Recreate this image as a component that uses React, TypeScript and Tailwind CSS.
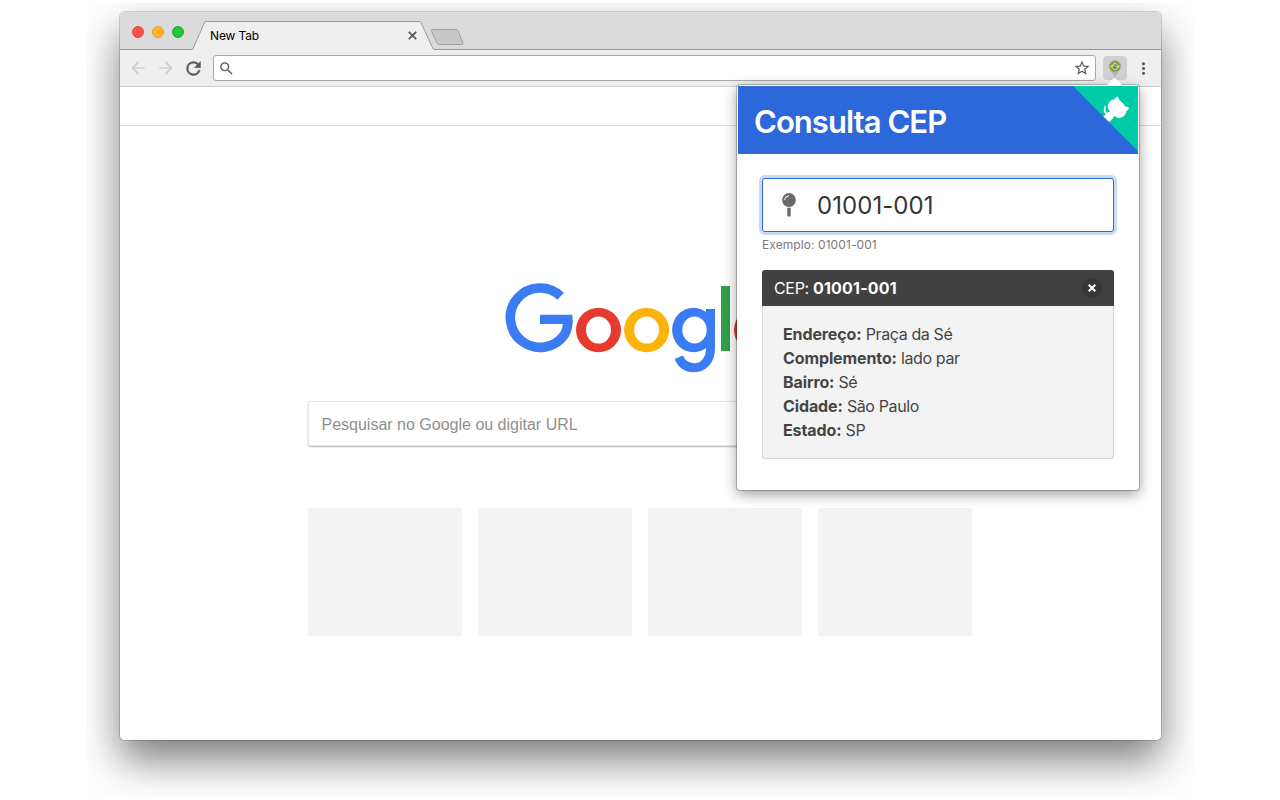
import React from "react";
import { MdArrowBack, MdArrowForward, MdSearch, MdStarBorder, MdMoreVert } from "react-icons/md";

const details = [
  { label: "Endereço:", value: "Praça da Sé" },
  { label: "Complemento:", value: "lado par" },
  { label: "Bairro:", value: "Sé" },
  { label: "Cidade:", value: "São Paulo" },
  { label: "Estado:", value: "SP" },
];

function TitleBar() {
  return (
    <div className="relative flex h-[38px] shrink-0 items-end border-b border-[#999] bg-[#dcdbdc] pl-3">
      <div className="flex gap-2 pb-[11px]">
        <span className="size-3 rounded-full border border-[#e9473f] bg-[#ff514c]" />
        <span className="size-3 rounded-full border border-[#e2a325] bg-[#ffb429]" />
        <span className="size-3 rounded-full border border-[#17b22d] bg-[#20c636]" />
      </div>
      <div className="relative -mb-px ml-2 flex h-[29px] w-[242px] items-center justify-between pr-[17px] pl-[18px]">
        <svg className="absolute inset-0" width="242" height="29" viewBox="0 0 242 29">
          <path d="M0 29V28.500Q.8 28.300 1.300 27L12.600 1.500Q13 .5 14 .5H227.500Q228.500 .5 229 1.500L240.700 27Q241.200 28.300 242 28.500V29Z" fill="#efefef" />
          <path d="M0 28.500Q.8 28.300 1.300 27L12.600 1.500Q13 .5 14 .5H227.500Q228.500 .5 229 1.500L240.700 27Q241.200 28.500 242 28.500" fill="none" stroke="#999" />
        </svg>
        <span className="relative text-[12px] leading-4 tracking-[-0.150px] text-black">New Tab</span>
        <svg className="relative" width="9" height="9" viewBox="0 0 9 9">
          <path d="M.8 .8L8.200 8.200M8.200 .8L.8 8.200" stroke="#5a5a5a" strokeWidth="1.800" />
        </svg>
      </div>
      <svg className="mb-[3px] -ml-1" width="35" height="18" viewBox="0 0 35 18">
        <path d="M2.200 1.500H26Q27.500 1.500 28 2.800L33 15Q33.500 16.500 32.200 16.500H9Q7.700 16.500 7 15.200L1.300 2.800Q.8 1.500 2.200 1.500Z" fill="#c8c8c8" stroke="#a0a0a0" />
      </svg>
    </div>
  );
}

function Toolbar() {
  return (
    <div className="flex h-[37px] shrink-0 items-center border-b border-[#cfcfcf] bg-[#efefef] pl-2">
      <MdArrowBack className="size-5 text-[#cecece]" />
      <MdArrowForward className="ml-2 size-5 text-[#cecece]" />
      <svg className="ml-[7px]" width="21" height="21" viewBox="0 0 24 24">
        <path d="M17.650 6.350A7.960 7.960 0 0 0 12 4a8 8 0 1 0 7.730 10h-2.080A6 6 0 1 1 12 6c1.660 0 3.140.69 4.220 1.780L13 11h7V4z" fill="#5a5a5a" stroke="#5a5a5a" strokeWidth=".5" />
      </svg>
      <div className="ml-[9px] flex h-[26px] w-[883px] items-center justify-between rounded-[3px] border border-[#a8a8a8] bg-white pr-1 pl-1">
        <MdSearch className="size-[17px] text-[#5a5a5a]" />
        <MdStarBorder className="size-[18px] text-[#5a5a5a]" />
      </div>
      <div className="ml-[7px] flex h-6 w-6 items-start justify-center rounded-sm bg-[#d0d0d0] pt-1">
        <svg width="14" height="17" viewBox="0 0 14 17">
          <path d="M7 0A6.300 6.300 0 0 0 .7 6.300C.7 10 5 12.500 7 17C9 12.500 13.300 10 13.300 6.300A6.300 6.300 0 0 0 7 0Z" fill="#b1b1b1" />
          <circle cx="7" cy="6.400" r="5.300" fill="#78a83c" />
          <path d="M2.200 6.400L7 2.600L11.800 6.400L7 10.200Z" fill="#ebe04c" />
          <circle cx="7" cy="6.400" r="2.200" fill="#2a68b8" />
          <path d="M4.900 5.700Q7.200 5.400 9.100 7.200" stroke="#e6f0f5" strokeWidth=".9" fill="none" />
        </svg>
      </div>
      <MdMoreVert className="ml-[7px] size-[19px] text-[#5a5a5a]" />
    </div>
  );
}

function GoogleLogo() {
  return (
    <svg width="272" height="92" viewBox="504 282 272 92">
      <path d="M560.600 296.200A29.700 29.700 0 1 0 564.700 334.200Q567.900 328.500 567.900 320" fill="none" stroke="#3b7cf4" strokeWidth="9.600" />
      <path d="M540 314.700H572.400Q572.900 319 572.400 324H540Z" fill="#3b7cf4" />
      <ellipse cx="598.500" cy="330" rx="22.500" ry="22.300" fill="#e63a2e" />
      <ellipse cx="598.500" cy="330.100" rx="12.500" ry="13.500" fill="#fff" />
      <ellipse cx="646.600" cy="330" rx="22.500" ry="22.300" fill="#fcb40a" />
      <ellipse cx="646.600" cy="330.100" rx="12.500" ry="13.500" fill="#fff" />
      <ellipse cx="693.500" cy="330" rx="21.400" ry="22.300" fill="#3b7cf4" />
      <path d="M706 305H718V309H706Z" fill="#fff" />
      <path d="M710.500 309V348C710.500 361 703 367.700 694 367.700C686.500 367.700 681.300 363.500 678.800 357.300" fill="none" stroke="#3b7cf4" strokeWidth="9" />
      <ellipse cx="694.500" cy="330" rx="12.200" ry="13.400" fill="#fff" />
      <rect x="721" y="286" width="9" height="65" fill="#2f9e49" />
      <ellipse cx="755.500" cy="330" rx="21.500" ry="22.300" fill="#e63a2e" />
    </svg>
  );
}

function NewTabPage() {
  return (
    <div className="flex grow flex-col bg-white">
      <div className="h-[39px] shrink-0 border-b border-[#dcdcdc]" />
      <div className="ml-[188px] flex w-[664px] flex-col">
        <div className="mt-[156px] ml-[196px]">
          <GoogleLogo />
        </div>
        <div className="mt-[27px] flex h-[45px] items-center rounded-[2px] border border-[#e4e4e4] bg-white pt-[3px] pl-[12.500px] font-['Liberation_Sans',sans-serif] text-[16px] text-[#8f8f8f] shadow-[0_1px_2px_rgba(0,0,0,0.28)]">
          Pesquisar no Google ou digitar URL
        </div>
        <div className="mt-[62px] grid grid-cols-4 gap-4">
          {[0, 1, 2, 3].map((tile) => (
            <div key={tile} className="h-32 rounded-[2px] bg-[#f3f3f3]" />
          ))}
        </div>
      </div>
    </div>
  );
}

function GithubCorner() {
  return (
    <svg className="absolute top-0 right-0 text-white" width="65" height="65" viewBox="0 0 250 250">
      <path d="M0,0 L115,115 L130,115 L142,142 L250,250 L250,0 Z" fill="#00cba9" />
      <path d="M128.3,109.0 C113.8,99.7 119.0,89.6 119.0,89.6 C122.0,82.7 120.5,78.6 120.5,78.6 C119.2,72.0 123.4,76.3 123.4,76.3 C127.3,80.9 125.5,87.3 125.5,87.3 C122.9,97.6 130.6,101.9 134.4,103.2" fill="currentColor" />
      <path d="M115.0,115.0 C114.9,115.1 118.7,116.5 119.8,115.4 L133.7,101.6 C136.9,99.2 139.9,98.4 142.2,98.6 C133.8,88.0 127.5,74.4 143.8,58.0 C148.5,53.4 154.0,51.2 159.7,51.0 C160.3,49.4 163.2,43.6 171.4,40.1 C171.4,40.1 176.1,42.5 178.8,56.2 C183.1,58.6 187.2,61.8 190.9,65.4 C194.5,69.0 197.7,73.2 200.1,77.6 C213.8,80.2 216.3,84.9 216.3,84.9 C212.7,93.1 206.9,96.0 205.4,96.6 C205.1,102.4 203.0,107.8 198.3,112.5 C181.9,128.9 168.3,122.5 157.7,114.1 C157.9,116.9 156.7,120.9 152.7,124.9 L141.0,136.5 C139.8,137.7 141.6,141.9 141.8,141.8 Z" fill="currentColor" />
    </svg>
  );
}

function Popup() {
  return (
    <div className="absolute top-[73px] left-[617px] w-[402px] rounded-[3px] border border-white bg-white shadow-[0_0_0_1px_rgba(0,0,0,0.22),0_4px_14px_rgba(0,0,0,0.4)]">
      <svg className="absolute -top-[9px] right-[14px]" width="19" height="9" viewBox="0 0 19 9">
        <path d="M1 9L9.500 .5L18 9Z" fill="#fff" />
      </svg>
      <div className="relative flex h-[68px] items-center bg-[#2c68d9] pt-[3px] pl-4">
        <h1 className="text-[31px] leading-9 font-semibold tracking-[-0.950px] whitespace-nowrap text-white">Consulta CEP</h1>
        <GithubCorner />
      </div>
      <div className="flex h-[335px] flex-col px-6 pt-6">
        <div className="flex h-[54px] items-center rounded-[3px] border border-[#2c68d9] bg-white shadow-[0_0_0_3px_#cad9f6]">
          <svg className="ml-[18px]" width="16" height="26" viewBox="0 0 16 26">
            <circle cx="8" cy="8" r="6.900" fill="#6b6b6b" />
            <path d="M3.600 7.500A4.500 4.500 0 0 1 7.600 3.700" fill="none" stroke="#fff" strokeWidth="1" strokeLinecap="round" />
            <path d="M6.300 15.500Q8 15.900 9.700 15.500V23.500Q8 26.200 6.300 23.500Z" fill="#6b6b6b" />
          </svg>
          <span className="ml-5 pt-0.5 text-[24px] leading-7 tracking-[0.050px] text-[#363636]">01001-001</span>
        </div>
        <div className="mt-1 text-[12px] leading-[18px] tracking-[0.080px] text-[#7a7a7a]">Exemplo: 01001-001</div>
        <div className="mt-4 flex h-9 items-center justify-between rounded-t-[3px] bg-[#414141] pr-3 pl-3 text-white">
          <span className="text-[16px] leading-5 tracking-[-0.33px]">
            CEP: <strong className="font-bold tracking-[0.200px]">01001-001</strong>
          </span>
          <span className="flex size-5 items-center justify-center rounded-full bg-[#373737]">
            <svg width="8" height="8" viewBox="0 0 8 8">
              <path d="M.7 .7L7.300 7.300M7.300 .7L.7 7.300" stroke="#fff" strokeWidth="2" />
            </svg>
          </span>
        </div>
        <div className="h-[153px] rounded-b-[3px] border border-t-0 border-[#d5d5d5] bg-[#f3f3f3] pt-4 pl-5 text-[16px] leading-6 text-[#454545]">
          {details.map((row) => (
            <div key={row.label} className="tracking-[-0.380px]">
              <strong className="font-bold tracking-[-0.110px]">{row.label}</strong> {row.value}
            </div>
          ))}
        </div>
      </div>
    </div>
  );
}

export default function App() {
  return (
    <div className="h-[800px] w-[1280px] overflow-hidden bg-white pt-[3px] pl-[87px] font-['Inter',sans-serif]">
      <div className="h-[795px] w-[1107px] overflow-hidden pt-[9px] pl-[33px]">
        <div className="relative h-[728px] w-[1041px] rounded-[5px] shadow-[0_0_0_1px_rgba(0,0,0,0.16),0_20px_42px_rgba(0,0,0,0.52)]">
          <div className="flex h-full flex-col overflow-hidden rounded-[5px]">
            <TitleBar />
            <Toolbar />
            <NewTabPage />
          </div>
          <Popup />
        </div>
      </div>
    </div>
  );
}
